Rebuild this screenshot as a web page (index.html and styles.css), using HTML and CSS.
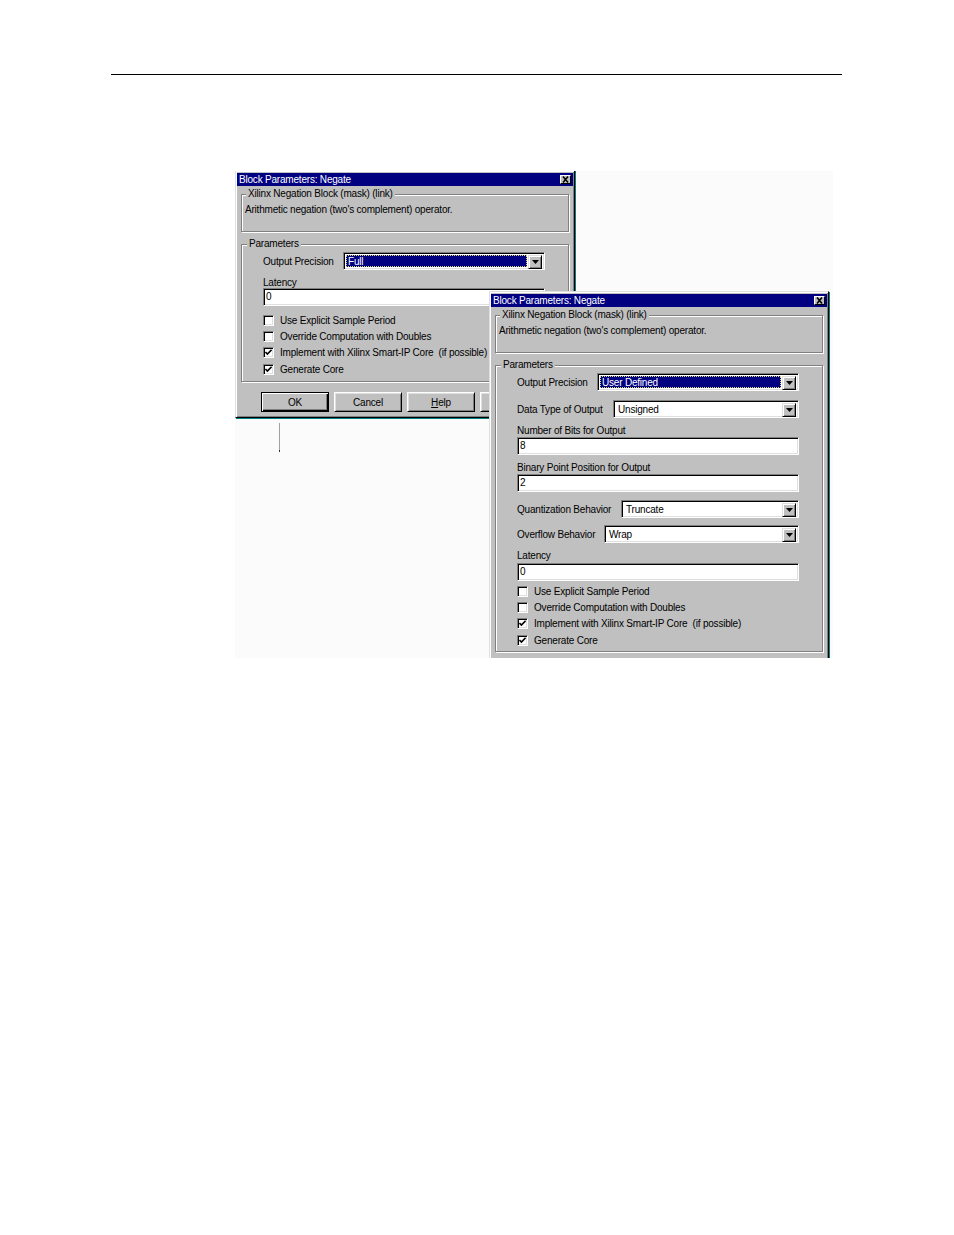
FILE: index.html
```html
<!DOCTYPE html>
<html>
<head>
<meta charset="utf-8">
<title>Block Parameters: Negate</title>
<link rel="stylesheet" href="styles.css">
</head>
<body>
<div class="rule"></div>
<div class="shot">
  <div class="dlg dlg-back">
    <div class="title"><span>Block Parameters: Negate</span><span class="close"><svg width="9" height="7" viewBox="0 0 9 7"><path d="M2 0.5 L7 6.5 M7 0.5 L2 6.5" stroke="#000" stroke-width="1.6"/></svg></span></div>
    <div class="grp grp-info">
      <span class="legend">Xilinx Negation Block (mask) (link)</span>
      <div class="desc">Arithmetic negation (two's complement) operator.</div>
    </div>
    <div class="grp params params-back">
      <span class="legend legend-p">Parameters</span>
      <div class="row">
        <span class="lbl">Output Precision</span>
        <div class="sel w-op"><span class="val hl">Full</span><span class="dd"><svg width="7" height="4" viewBox="0 0 7 4"><path d="M0 0 H7 L3.5 4 Z" fill="#000"/></svg></span></div>
      </div>
      <div class="flabel">Latency</div>
      <div class="inp inp-back">0</div>
      <div class="checks checks-back">
        <div class="cb"><span class="box"></span><span>Use Explicit Sample Period</span></div>
        <div class="cb"><span class="box"></span><span>Override Computation with Doubles</span></div>
        <div class="cb"><span class="box"><svg width="7" height="7" viewBox="0 0 7 7"><path d="M0.4 3 L2.4 5 L6.6 0.8" stroke="#000" stroke-width="1.7" fill="none"/></svg></span><span>Implement with Xilinx Smart-IP Core &nbsp;(if possible)</span></div>
        <div class="cb"><span class="box"><svg width="7" height="7" viewBox="0 0 7 7"><path d="M0.4 3 L2.4 5 L6.6 0.8" stroke="#000" stroke-width="1.7" fill="none"/></svg></span><span>Generate Core</span></div>
      </div>
    </div>
    <div class="btns">
      <div class="btn def">OK</div>
      <div class="btn">Cancel</div>
      <div class="btn"><u>H</u>elp</div>
      <div class="btn"></div>
    </div>
  </div>

  <div class="lead"></div>

  <div class="dlg dlg-front">
    <div class="title"><span>Block Parameters: Negate</span><span class="close"><svg width="9" height="7" viewBox="0 0 9 7"><path d="M2 0.5 L7 6.5 M7 0.5 L2 6.5" stroke="#000" stroke-width="1.6"/></svg></span></div>
    <div class="grp grp-info">
      <span class="legend">Xilinx Negation Block (mask) (link)</span>
      <div class="desc">Arithmetic negation (two's complement) operator.</div>
    </div>
    <div class="grp params params-front">
      <span class="legend legend-p">Parameters</span>
      <div class="row">
        <span class="lbl">Output Precision</span>
        <div class="sel w-op"><span class="val hl">User Defined</span><span class="dd"><svg width="7" height="4" viewBox="0 0 7 4"><path d="M0 0 H7 L3.5 4 Z" fill="#000"/></svg></span></div>
      </div>
      <div class="row mt9">
        <span class="lbl">Data Type of Output</span>
        <div class="sel w-dt"><span class="val">Unsigned</span><span class="dd"><svg width="7" height="4" viewBox="0 0 7 4"><path d="M0 0 H7 L3.5 4 Z" fill="#000"/></svg></span></div>
      </div>
      <div class="flabel mt8">Number of Bits for Output</div>
      <div class="inp">8</div>
      <div class="flabel">Binary Point Position for Output</div>
      <div class="inp">2</div>
      <div class="row mt8">
        <span class="lbl">Quantization Behavior</span>
        <div class="sel w-qb"><span class="val">Truncate</span><span class="dd"><svg width="7" height="4" viewBox="0 0 7 4"><path d="M0 0 H7 L3.5 4 Z" fill="#000"/></svg></span></div>
      </div>
      <div class="row mt7">
        <span class="lbl">Overflow Behavior</span>
        <div class="sel w-ob"><span class="val">Wrap</span><span class="dd"><svg width="7" height="4" viewBox="0 0 7 4"><path d="M0 0 H7 L3.5 4 Z" fill="#000"/></svg></span></div>
      </div>
      <div class="flabel mt8">Latency</div>
      <div class="inp mt2">0</div>
      <div class="checks checks-front">
        <div class="cb"><span class="box"></span><span>Use Explicit Sample Period</span></div>
        <div class="cb"><span class="box"></span><span>Override Computation with Doubles</span></div>
        <div class="cb"><span class="box"><svg width="7" height="7" viewBox="0 0 7 7"><path d="M0.4 3 L2.4 5 L6.6 0.8" stroke="#000" stroke-width="1.7" fill="none"/></svg></span><span>Implement with Xilinx Smart-IP Core &nbsp;(if possible)</span></div>
        <div class="cb"><span class="box"><svg width="7" height="7" viewBox="0 0 7 7"><path d="M0.4 3 L2.4 5 L6.6 0.8" stroke="#000" stroke-width="1.7" fill="none"/></svg></span><span>Generate Core</span></div>
      </div>
    </div>
  </div>
</div>
</body>
</html>
```
FILE: styles.css
```css
* { box-sizing: border-box; }
body {
  margin: 0;
  background: #fff;
  font-family: "Liberation Sans", Arial, sans-serif;
}
.rule {
  margin: 74px 0 0 111px;
  width: 731px;
  height: 1px;
  background: #000;
}
.shot {
  position: relative;
  margin: 96px 0 0 235px;
  width: 598px;
  height: 487px;
  overflow: hidden;
  background: #fbfbfb;
}
.dlg {
  position: absolute;
  width: 340px;
  background: #c0c0c0;
  border: 1px solid;
  border-color: #dfdfdf #000 #000 #dfdfdf;
  box-shadow: inset 1px 1px 0 #fff, inset -1px -1px 0 #808080, 1px 1px 0 #008080;
  padding: 2px 1px 1px 1px;
  font-size: 10px;
  letter-spacing: -0.2px;
  color: #000;
}
.dlg-back { left: 0; top: -1px; height: 248px; }
.dlg-front { left: 254px; top: 120px; height: 400px; }

.title {
  height: 13px;
  background: #000080;
  color: #fff;
  padding-left: 2px;
  display: flex;
  align-items: center;
  justify-content: space-between;
  line-height: 13px;
  white-space: nowrap;
}
.close {
  width: 11px;
  height: 9px;
  margin-right: 2px;
  background: #c0c0c0;
  border: 1px solid;
  border-color: #fff #000 #000 #fff;
  display: flex;
  align-items: center;
  justify-content: center;
}
.close svg { display: block; }

.grp {
  position: relative;
  margin: 0 4px;
  border: 1px solid #808080;
  box-shadow: inset 1px 1px 0 #fff, 1px 1px 0 #fff;
}
.legend {
  position: absolute;
  top: -7px;
  left: 4px;
  padding: 0 2px;
  background: #c0c0c0;
  line-height: 12px;
  white-space: nowrap;
}
.legend-p { left: 5px; }
.grp-info {
  margin-top: 8px;
  height: 38px;
  padding: 9px 3px 0 3px;
}
.desc { line-height: 12px; white-space: nowrap; }

.params {
  margin-top: 12px;
  padding: 7px 23px 4px 21px;
}
.params-front { padding-bottom: 2px; }

.row {
  display: flex;
  align-items: center;
  height: 18px;
  white-space: nowrap;
}
.lbl { flex: 1; }
.sel {
  flex: none;
  height: 18px;
  background: #fff;
  border: 1px solid;
  border-color: #808080 #fff #fff #808080;
  box-shadow: inset 1px 1px 0 #000, inset -1px -1px 0 #dfdfdf;
  padding: 2px;
  display: flex;
}
.w-op { width: 202px; }
.w-dt { width: 186px; }
.w-qb { width: 178px; }
.w-ob { width: 195px; }
.val {
  flex: 1;
  margin-right: 1px;
  padding-left: 2px;
  line-height: 14px;
}
.val.hl {
  background: #000080;
  color: #fff;
  outline: 1px dotted #d8d870;
  outline-offset: -1px;
}
.dd {
  width: 14px;
  height: 14px;
  flex: none;
  background: #c0c0c0;
  border: 1px solid;
  border-color: #dfdfdf #000 #000 #dfdfdf;
  box-shadow: inset 1px 1px 0 #fff, inset -1px -1px 0 #808080;
  display: flex;
  align-items: center;
  justify-content: center;
}
.dd svg { display: block; }

.flabel {
  margin-top: 8px;
  height: 10px;
  line-height: 10px;
  white-space: nowrap;
}
.inp {
  margin-top: 1px;
  height: 18px;
  background: #fff;
  border: 1px solid;
  border-color: #808080 #fff #fff #808080;
  box-shadow: inset 1px 1px 0 #000, inset -1px -1px 0 #dfdfdf;
  padding-left: 2px;
  line-height: 16px;
}
.inp-back { margin-top: 0; }

.mt2 { margin-top: 2px; }
.mt6 { margin-top: 6px; }
.mt7 { margin-top: 7px; }
.mt8 { margin-top: 8px; }
.mt9 { margin-top: 9px; }

.checks-back { margin-top: 6px; }
.checks-front { margin-top: 2px; }
.cb {
  display: flex;
  align-items: center;
  gap: 6px;
  height: 16px;
  white-space: nowrap;
}
.checks-back .cb:last-child { margin-top: 1px; }
.checks-front .cb { height: 16.4px; }
.box {
  width: 11px;
  height: 11px;
  flex: none;
  background: #fff;
  border: 1px solid;
  border-color: #808080 #fff #fff #808080;
  box-shadow: inset 1px 1px 0 #000, inset -1px -1px 0 #dfdfdf;
  display: flex;
  align-items: center;
  justify-content: center;
}
.box svg { display: block; }

.btns {
  display: flex;
  gap: 5px;
  margin: 10px 0 0 24px;
}
.btn {
  width: 68px;
  height: 20px;
  flex: none;
  border: 1px solid;
  border-color: #fff #000 #000 #fff;
  box-shadow: inset 1px 1px 0 #dfdfdf, inset -1px -1px 0 #808080;
  display: flex;
  align-items: center;
  justify-content: center;
}
.btn.def {
  border-color: #000;
  box-shadow: inset 1px 1px 0 #fff, inset -1px -1px 0 #000, inset -2px -2px 0 #808080;
}

.lead {
  position: absolute;
  left: 44px;
  top: 252px;
  width: 1px;
  height: 29px;
  background: #a0a0a0;
  border-bottom: 2px solid #333;
}
```
